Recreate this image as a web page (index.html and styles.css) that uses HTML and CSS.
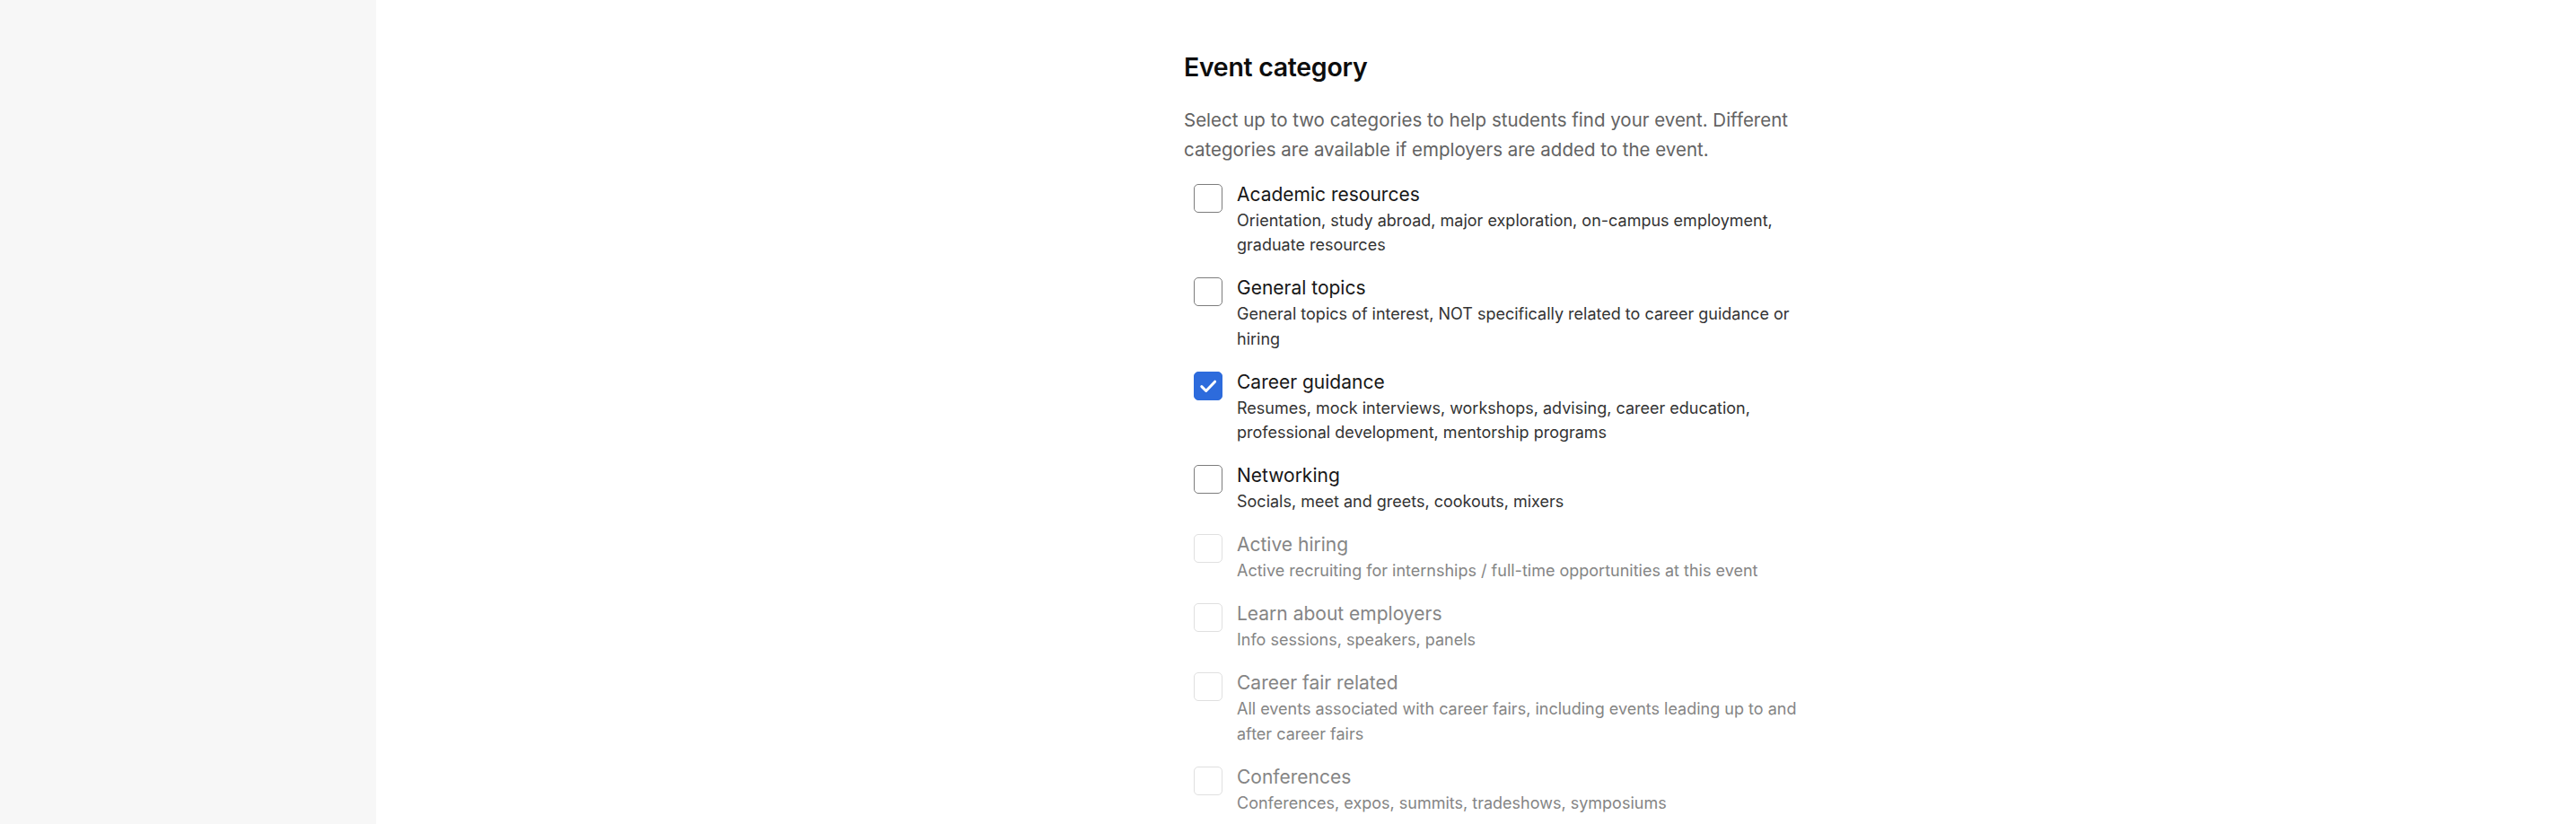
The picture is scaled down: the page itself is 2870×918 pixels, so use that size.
FILE: index.html
```html
<!DOCTYPE html>
<html lang="en">
<head>
<meta charset="utf-8">
<title>Event category</title>
<link rel="stylesheet" href="styles.css">
</head>
<body>
<div class="page">
  <aside class="sidebar"></aside>
  <main class="main">
    <section class="section">
      <h2 class="title">Event category</h2>
      <p class="intro">Select up to two categories to help students find your event. Different categories are available if employers are added to the event.</p>
      <ul class="options">
        <li class="option">
          <span class="box"></span>
          <div class="text">
            <div class="label">Academic resources</div>
            <div class="desc">Orientation, study abroad, major exploration, on-campus employment, graduate resources</div>
          </div>
        </li>
        <li class="option">
          <span class="box"></span>
          <div class="text">
            <div class="label">General topics</div>
            <div class="desc">General topics of interest, NOT specifically related to career guidance or hiring</div>
          </div>
        </li>
        <li class="option">
          <span class="box checked">
            <svg viewBox="0 0 32 32" width="32" height="32"><path d="M8.8 16.6l4.9 4.9L23.6 11.2" fill="none" stroke="#fff" stroke-width="3" stroke-linecap="round" stroke-linejoin="round"/></svg>
          </span>
          <div class="text">
            <div class="label">Career guidance</div>
            <div class="desc">Resumes, mock interviews, workshops, advising, career education, professional development, mentorship programs</div>
          </div>
        </li>
        <li class="option">
          <span class="box"></span>
          <div class="text">
            <div class="label">Networking</div>
            <div class="desc">Socials, meet and greets, cookouts, mixers</div>
          </div>
        </li>
        <li class="option disabled">
          <span class="box"></span>
          <div class="text">
            <div class="label">Active hiring</div>
            <div class="desc">Active recruiting for internships / full-time opportunities at this event</div>
          </div>
        </li>
        <li class="option disabled">
          <span class="box"></span>
          <div class="text">
            <div class="label">Learn about employers</div>
            <div class="desc">Info sessions, speakers, panels</div>
          </div>
        </li>
        <li class="option disabled">
          <span class="box"></span>
          <div class="text">
            <div class="label">Career fair related</div>
            <div class="desc">All events associated with career fairs, including events leading up to and after career fairs</div>
          </div>
        </li>
        <li class="option disabled">
          <span class="box"></span>
          <div class="text">
            <div class="label">Conferences</div>
            <div class="desc">Conferences, expos, summits, tradeshows, symposiums</div>
          </div>
        </li>
      </ul>
    </section>
  </main>
</div>
</body>
</html>
```

FILE: styles.css
```css
* { box-sizing: border-box; }
html, body { margin: 0; padding: 0; }
body {
  font-family: Inter, "Noto Sans", "Liberation Sans", sans-serif;
  background: #ffffff;
  color: #222;
}
.page {
  display: flex;
  height: 918px;
  overflow: hidden;
}
.sidebar {
  width: 419px;
  flex: none;
  background: #f7f7f7;
}
.main {
  flex: 1;
  padding-left: 900px;
  padding-top: 59px;
}
.section { width: 720px; }
.title {
  margin: 0;
  font-size: 28.5px;
  line-height: 32px;
  font-weight: 600;
  color: #0d0d0d;
  letter-spacing: -0.3px;
}
.intro {
  margin: 26px 0 0;
  font-size: 20.5px;
  line-height: 33px;
  color: #636363;
  width: 700px;
}
.options {
  list-style: none;
  margin: 18.5px 0 0;
  padding: 0;
  display: flex;
  flex-direction: column;
  gap: 19.5px;
}
.option {
  display: flex;
  align-items: flex-start;
  gap: 16px;
  padding-left: 11px;
}
.box {
  flex: none;
  width: 32px;
  height: 32px;
  margin-top: 3px;
  border: 1.5px solid #7d7d7d;
  border-radius: 5px;
  background: #fff;
  display: flex;
  align-items: center;
  justify-content: center;
}
.box.checked {
  background: #2d6bdc;
  border-color: #2d6bdc;
}
.box.checked svg { display: block; width: 32px; height: 32px; flex: none; }
.text { width: 645px; }
.label {
  font-size: 21px;
  line-height: 30px;
  color: #171717;
}
.desc {
  font-size: 18px;
  line-height: 27.5px;
  color: #333333;
}
.disabled .box { border-color: #e0e0e0; }
.disabled .label,
.disabled .desc { color: #858585; }
```
